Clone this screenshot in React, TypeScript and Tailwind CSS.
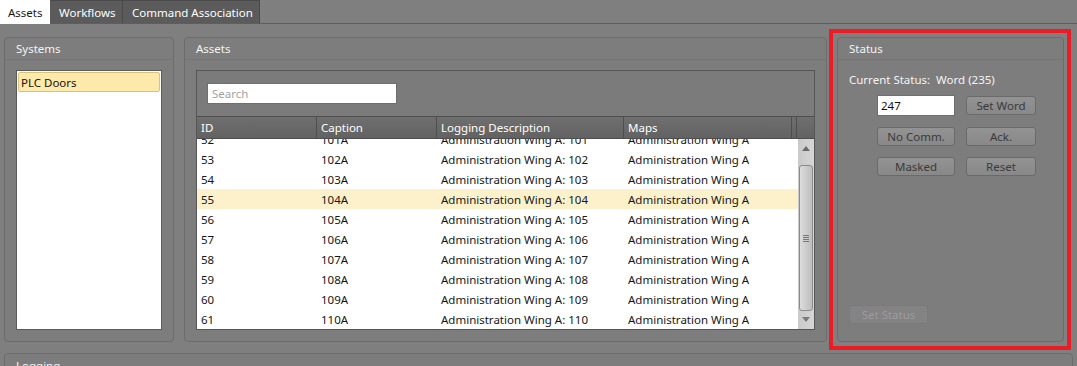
import React from 'react';

type Row = { id: string; caption: string; desc: string; map: string };

const rows: Row[] = [52, 53, 54, 55, 56, 57, 58, 59, 60, 61].map((id, i) => ({
    id: String(id),
    caption: `${101 + i}A`,
    desc: `Administration Wing A: ${101 + i}`,
    map: 'Administration Wing A',
}));

const Panel: React.FC<{ title: string; className?: string; bodyClassName?: string; children?: React.ReactNode }> = ({ title, className = '', bodyClassName = '', children }) => (
    <div className={`flex flex-col rounded-[4px] border border-[#6c6c6c] bg-[#7d7d7d] ${className}`}>
        <div className="h-[22px] shrink-0 border-b border-[#747474] px-[11px] pt-px flex items-center text-[#f4f4f4]">{title}</div>
        <div className={bodyClassName}>{children}</div>
    </div>
);

const Btn: React.FC<{ label: string; disabled?: boolean; className?: string }> = ({ label, disabled, className = '' }) => (
    <button
        className={`h-[19px] rounded-[3px] border flex items-center justify-center leading-none ${disabled
            ? 'border-[#7a7a7a] bg-[#838383] text-[#9c9c9c]'
            : 'border-[#6a6a6a] bg-gradient-to-b from-[#939393] to-[#888888] text-[#3a3a3a]'} ${className}`}
    >
        {label}
    </button>
);

export default function App() {
    return (
        <div className="relative w-[1077px] h-[366px] overflow-hidden bg-[#7f7f7f] font-['Noto_Sans',sans-serif] text-[11.5px]">
            {/* Tab strip */}
            <div className="h-[24px] flex items-end border-b border-[#5e5e5e]">
                <div className="h-[24px] w-[50px] bg-white text-[#1a1a1a] pl-[8px] pt-px flex items-center -mb-px">Assets</div>
                <div className="h-[23px] w-[73px] bg-[#5b5b5b] border-t border-r border-[#4a4a4a] text-white pl-[9px] pt-px flex items-center">Workflows</div>
                <div className="h-[23px] w-[137px] bg-[#5b5b5b] border-t border-r border-[#4a4a4a] text-white pl-[9px] pt-px flex items-center">Command Association</div>
            </div>

            <div className="pt-[13px] px-[4px]">
                <div className="flex h-[305px] gap-[10px]">
                    {/* Systems */}
                    <Panel title="Systems" className="w-[170px]" bodyClassName="pt-[10px] pl-[11px] pr-[11px]">
                        <div className="h-[260px] bg-white border border-[#5a5a5a] p-px">
                            <div className="h-[20px] rounded-[2px] border border-[#d9c27c] bg-[#fde9a9] pl-[2px] pt-px flex items-center text-[#1a1010]">PLC Doors</div>
                        </div>
                    </Panel>

                    {/* Assets */}
                    <Panel title="Assets" className="w-[643px]" bodyClassName="pt-[10px] pl-[11px] pr-[11px]">
                        <div className="h-[260px] border border-[#565656] flex flex-col">
                            <div className="h-[45px] shrink-0 bg-[#7b7b7b] pl-[10px] pt-[12px]">
                                <div className="w-[190px] h-[21px] bg-white border border-[#6f6f6f] pl-[4px] pt-px flex items-center text-[#a3a3a3]">Search</div>
                            </div>
                            <div className="h-[23px] shrink-0 flex bg-gradient-to-b from-[#6f6f6f] to-[#626262] border-t border-b border-[#4e4e4e] text-white">
                                <div className="w-[120px] border-r border-[#4e4e4e] pl-[4px] pt-px flex items-center">ID</div>
                                <div className="w-[120px] border-r border-[#4e4e4e] pl-[4px] pt-px flex items-center">Caption</div>
                                <div className="w-[187px] border-r border-[#4e4e4e] pl-[4px] pt-px flex items-center">Logging Description</div>
                                <div className="w-[168px] border-r border-[#4e4e4e] pl-[4px] pt-px flex items-center">Maps</div>
                                <div className="w-[5px] border-r border-[#4e4e4e]"></div>
                                <div className="flex-1"></div>
                            </div>
                            <div className="flex flex-1 min-h-0 bg-white">
                                <div className="flex-1 overflow-hidden">
                                    <div className="-mt-[10px]">
                                        {rows.map(r => (
                                            <div key={r.id} className={`h-[20px] pt-[2px] flex items-center text-[#161616] ${r.id === '55' ? 'bg-[#fcf1cb]' : ''}`}>
                                                <div className="w-[120px] pl-[4px]">{r.id}</div>
                                                <div className="w-[120px] pl-[4px]">{r.caption}</div>
                                                <div className="w-[187px] pl-[4px]">{r.desc}</div>
                                                <div className="pl-[4px]">{r.map}</div>
                                            </div>
                                        ))}
                                    </div>
                                </div>
                                {/* Scrollbar */}
                                <div className="w-[16px] bg-gradient-to-r from-[#c9c9c9] to-[#d6d6d6] flex flex-col items-center">
                                    <svg width="8" height="5" viewBox="0 0 8 5" className="mt-[7px]"><path d="M0 5 L4 0 L8 5 Z" fill="#6a6a6a" /></svg>
                                    <div className="mt-[14px] w-[14px] h-[146px] rounded-[3px] border border-[#8a8a8a] bg-gradient-to-r from-[#dcdcdc] to-[#bdbdbd] flex items-center justify-center">
                                        <svg width="6" height="7" viewBox="0 0 6 7"><path d="M0 0.5 H6 M0 2.5 H6 M0 4.5 H6 M0 6.5 H6" stroke="#777" strokeWidth="1" /></svg>
                                    </div>
                                    <svg width="8" height="5" viewBox="0 0 8 5" className="mt-[6px]"><path d="M0 0 L4 5 L8 0 Z" fill="#7a7a7a" /></svg>
                                </div>
                            </div>
                        </div>
                    </Panel>

                    {/* Status */}
                    <Panel title="Status" className="w-[227px]" bodyClassName="flex-1 flex flex-col pl-[11px] pr-[11px] pt-[12px] pb-[17px]">
                        <div className="text-[#f4f4f4] leading-[16px]">Current Status:&nbsp; Word (235)</div>
                        <div className="ml-[28px] mt-[8px] grid grid-cols-[78px_70px] gap-x-[11px] gap-y-[11px]">
                            <div className="h-[21px] -mt-px bg-white border border-[#6f6f6f] pl-[3px] pt-px flex items-center text-[#111]">247</div>
                            <Btn label="Set Word" />
                            <Btn label="No Comm." />
                            <Btn label="Ack." />
                            <Btn label="Masked" />
                            <Btn label="Reset" />
                        </div>
                        <div className="mt-auto">
                            <Btn label="Set Status" disabled className="w-[79px]" />
                        </div>
                    </Panel>
                </div>

                {/* Logging */}
                <div className="mt-[11px] w-[1069px] h-[40px] rounded-[4px] border border-[#6c6c6c] bg-[#7d7d7d]">
                    <div className="px-[11px] pt-[3px] text-[#f4f4f4]">Logging</div>
                </div>
            </div>

            {/* Annotation highlight */}
            <div className="absolute left-[829px] top-[29px] w-[242px] h-[321px] border-4 border-[#ed1c24] pointer-events-none"></div>
        </div>
    );
}
